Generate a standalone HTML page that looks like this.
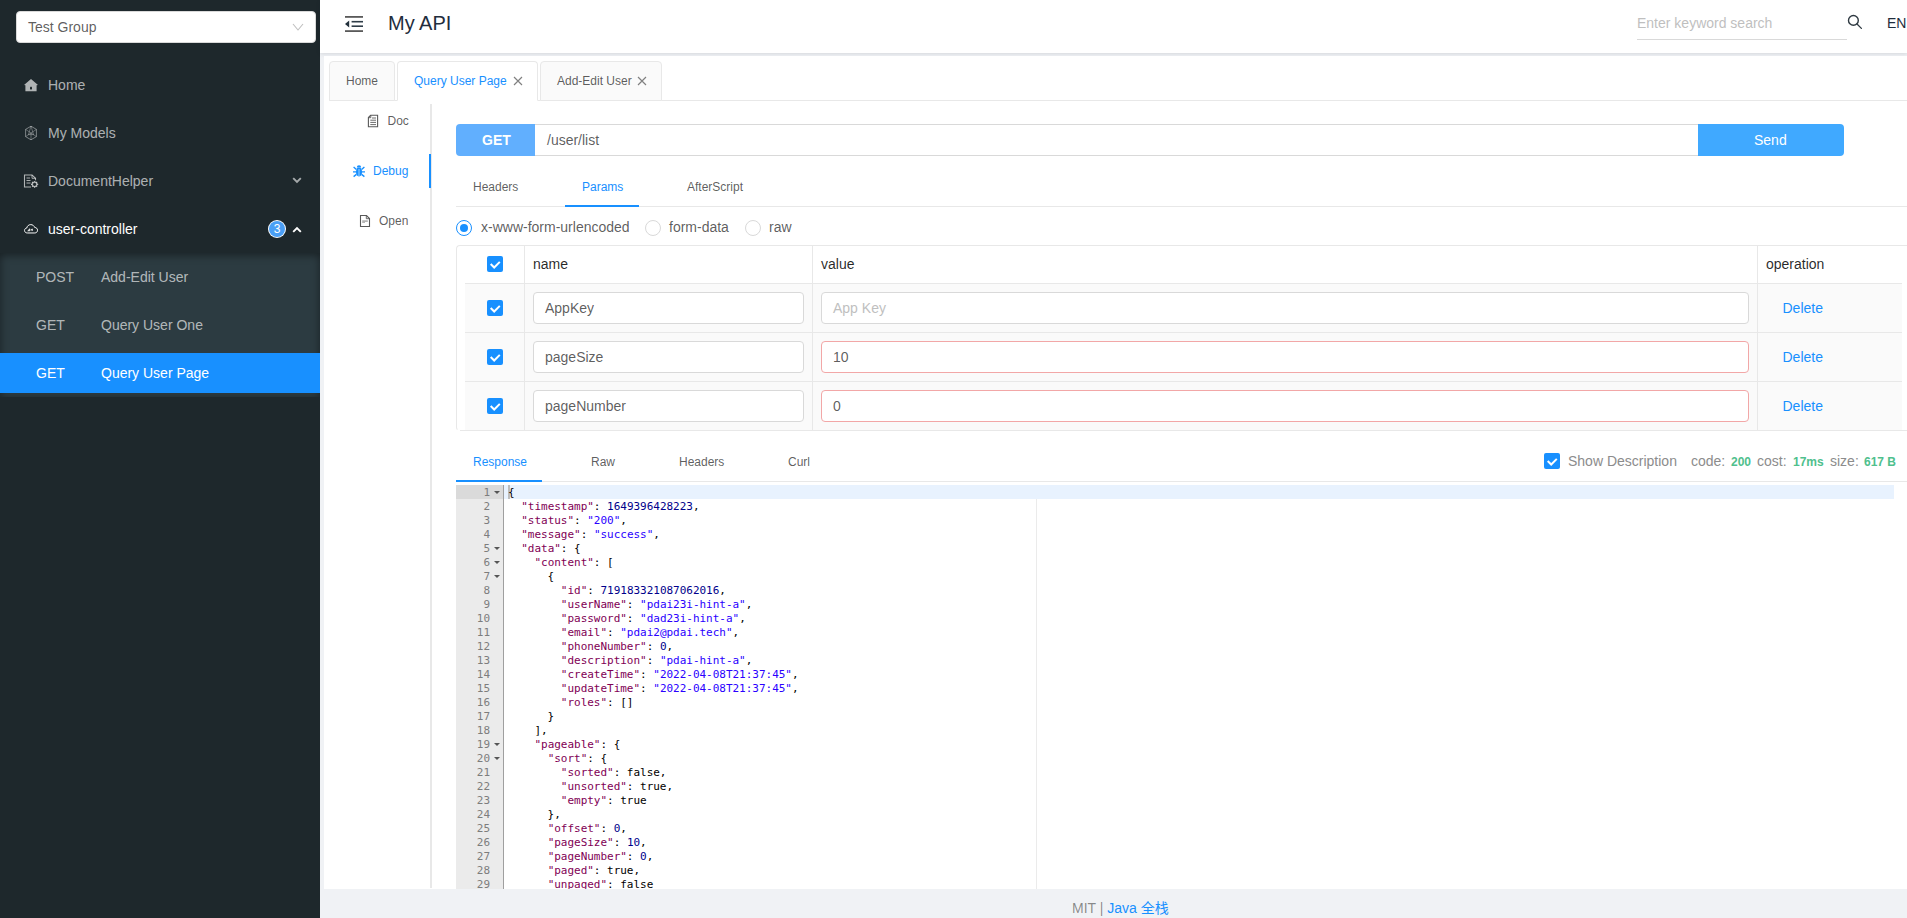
<!DOCTYPE html>
<html lang="en">
<head>
<meta charset="utf-8">
<title>My API</title>
<style>
*{box-sizing:border-box;margin:0;padding:0}
html,body{width:1907px;height:918px;overflow:hidden;background:#f0f2f5}
body{position:relative;font-family:"Liberation Sans","Noto Sans CJK SC",sans-serif;font-size:14px;color:rgba(0,0,0,.65)}
.abs{position:absolute}
.t{position:absolute;white-space:nowrap;line-height:20px;height:20px}
/* sidebar */
#side{left:0;top:0;width:320px;height:918px;background:#1e282c}
#grp{left:16px;top:11px;width:300px;height:32px;background:#fff;border:1px solid #d9d9d9;border-radius:4px}
.mi{position:absolute;left:0;width:320px;height:40px;color:rgba(255,255,255,.65);font-size:14px}
.mi .t{left:48px;top:10px}
.mi svg{position:absolute}
#sub{left:0;top:253px;width:320px;height:144px;background:#2c3b41;box-shadow:inset 0 2px 8px rgba(0,0,0,.45)}
.si{position:absolute;left:0;width:320px;height:40px;color:rgba(255,255,255,.65)}
.si .m{left:36px;top:10px}
.si .n{left:101px;top:10px}
.si.on{background:#1890ff;color:#fff}
/* header */
#hdr{left:320px;top:0;width:1587px;height:53px;background:#fff;box-shadow:0 1px 4px rgba(0,21,41,.12)}
/* main */
#main{left:324px;top:56px;width:1583px;height:833px;background:#fff}
.tab{position:absolute;top:61px;height:40px;border:1px solid #e8e8e8;border-radius:4px 4px 0 0;background:#fafafa;font-size:12px}
.tab{border-bottom-color:#e8e8e8}.tab.on{background:#fff;border-bottom-color:#fff;color:#1890ff}
.blue{color:#1890ff}
.f12{font-size:12px}
/* table */
.inp{position:absolute;height:32px;background:#fff;border:1px solid #d9d9d9;border-radius:4px}
.inp.red{border-color:#f2a7a7}
.inp .t{left:11px;top:5px}
.ck{position:absolute;width:16px;height:16px;background:#1890ff;border-radius:2px}
.hl{position:absolute;height:1px;background:#e8e8e8}
.vl{position:absolute;width:1px;background:#e8e8e8}
/* code */
#code{left:456px;top:485px;width:1438px;height:404px;overflow:hidden;font-family:"DejaVu Sans Mono",monospace;font-size:11px;letter-spacing:-0.02px;line-height:14px;color:#000}
#gut{left:0;top:0;width:47px;height:404px;background:#ebebeb;color:#7d7d7d}
.ln{position:absolute;left:0;width:34px;text-align:right;height:14px;margin-top:1px}
.cl{position:absolute;left:52px;height:14px;white-space:pre;margin-top:1px}
.fd{position:absolute;left:38px;width:0;height:0;border:3px solid transparent;border-top:3.5px solid #555;border-bottom:0}
.jk{color:#7f0055}.js{color:#2a00ff}.jn{color:#00008b}
</style>
</head>
<body>
<!-- SIDEBAR -->
<div id="side" class="abs">
  <div id="grp" class="abs"><span class="t" style="left:11px;top:5px">Test Group</span>
    <svg class="abs" style="left:274.5px;top:9px" width="12" height="12" viewBox="0 0 12 12"><path d="M1 3 L6 9 L11 3" fill="none" stroke="#bfbfbf" stroke-width="1.1"/></svg>
  </div>
  <div class="mi" style="top:65px"><svg style="left:24px;top:14px" width="14" height="13" viewBox="0 0 14 13"><path d="M7 0 L14 6 L12.6 6.3 L12.6 12.2 L1.4 12.2 L1.4 6.3 L0 6 Z" fill="rgba(255,255,255,.65)"/><rect x="6" y="7.8" width="2" height="2.6" rx=".4" fill="#1e282c"/></svg><span class="t">Home</span></div>
  <div class="mi" style="top:113px"><svg style="left:24px;top:12px" width="14" height="16" viewBox="0 0 14 16"><g fill="none" stroke="rgba(255,255,255,.42)" stroke-width="1"><path d="M7 1.2 L12.4 4.4 L12.4 11.6 L7 14.8 L1.6 11.6 L1.6 4.4 Z"/><path d="M1.6 4.4 L7 8 L12.4 4.4 M7 8 L7 14.8 M7 1.2 L4.4 9.6 L9.6 9.6 Z M1.6 11.6 L7 8 L12.4 11.6" stroke-width=".7"/></g></svg><span class="t">My Models</span></div>
  <div class="mi" style="top:161px"><svg style="left:23px;top:13px" width="16" height="14.4" viewBox="0 0 16 15" preserveAspectRatio="none"><g fill="none" stroke="rgba(255,255,255,.65)" stroke-width="1.1"><path d="M8 13.5 L1.5 13.5 L1.5 1 L9 1 L12.5 4.5 L12.5 6.5"/><path d="M9 1 L9 4.5 L12.5 4.5" stroke-width=".9"/><path d="M3.5 4.2 L7 4.2 M3.5 6.8 L7.5 6.8 M3.5 9.4 L7.5 9.4" stroke-width="1"/><circle cx="11.6" cy="10.8" r="2.3" stroke-width="1.3"/><path d="M11.6 7.2 L11.6 8.2 M11.6 13.4 L11.6 14.4 M8 10.8 L9 10.8 M14.2 10.8 L15.2 10.8 M9.1 8.3 L9.8 9 M13.4 12.6 L14.1 13.3 M9.1 13.3 L9.8 12.6 M13.4 9 L14.1 8.3" stroke-width="1.2"/></g></svg><span class="t">DocumentHelper</span><svg style="left:292px;top:16px" width="10" height="7" viewBox="0 0 10 7"><path d="M1.2 1.2 L5 5 L8.8 1.2" fill="none" stroke="rgba(255,255,255,.6)" stroke-width="1.9"/></svg></div>
  <div class="mi" style="top:209px;color:#fff"><svg style="left:24px;top:15.3px" width="14.1" height="9.7" viewBox="0 0 16 11"><path d="M4 10.2 C1.8 10.2 .6 8.9 .6 7.3 C.6 5.8 1.7 4.7 3.2 4.5 C3.6 2.2 5.4 .7 7.7 .7 C9.8 .7 11.5 2 12.1 3.9 C14 4 15.4 5.3 15.4 7.1 C15.4 8.9 14 10.2 12.2 10.2 Z" fill="none" stroke="#fff" stroke-width="1.1"/><path d="M4.2 7.8 L6.6 5.4 L6.6 7.8 Z M8.2 5.6 L8.2 7.8 M8.2 6.4 L9.6 5.6 L9.6 7.8" fill="#fff" stroke="#fff" stroke-width=".7"/></svg><span class="t">user-controller</span><div class="abs" style="left:269px;top:12px;width:16px;height:16px;border-radius:50%;background:#4a9ff5;box-shadow:0 0 0 1px #fff;color:#fff;font-size:12px;line-height:16px;text-align:center">3</div><svg style="left:292px;top:17px" width="10" height="7" viewBox="0 0 10 7"><path d="M1.2 5.8 L5 2 L8.8 5.8" fill="none" stroke="#fff" stroke-width="1.9"/></svg></div>
  <div id="sub" class="abs">
    <div class="si" style="top:4px"><span class="t m">POST</span><span class="t n">Add-Edit User</span></div>
    <div class="si" style="top:52px"><span class="t m">GET</span><span class="t n">Query User One</span></div>
    <div class="si on" style="top:100px"><span class="t m">GET</span><span class="t n">Query User Page</span></div>
  </div>
</div>
<!-- HEADER -->
<div id="hdr" class="abs">
  <span class="t" style="left:68px;top:9px;font-size:20px;line-height:28px;height:28px;color:#1f2d3d">My API</span>
  <svg class="abs" style="left:25px;top:15px" width="18" height="18" viewBox="0 0 18 18"><g fill="#5a5a5a"><rect x="0" y="1" width="18" height="1.8"/><rect x="0" y="15.2" width="18" height="1.8"/><rect x="6.6" y="5.9" width="11.4" height="1.6" fill="#2f3d48"/><rect x="6.6" y="10.4" width="11.4" height="1.6" fill="#2f3d48"/><path d="M0 9 L4.2 5.4 L4.2 12.6 Z" fill="#22303c"/></g></svg>
  <span class="t" style="left:1317px;top:13px;color:#bfbfbf">Enter keyword search</span>
  <div class="hl" style="left:1317px;top:39px;width:210px;background:#d9d9d9"></div>
  <svg class="abs" style="left:1527px;top:14px" width="16" height="16" viewBox="0 0 16 16"><circle cx="6.4" cy="6.4" r="4.9" fill="none" stroke="#2f3a42" stroke-width="1.4"/><path d="M10 10 L14.4 14.4" stroke="#2f3a42" stroke-width="1.3" stroke-linecap="round"/></svg>
  <span class="t" style="left:1567px;top:13px;color:#1f2d3d">EN</span>
</div>
<!-- MAIN -->
<div id="main" class="abs"></div>
<!--TABS-->
<div class="hl" style="left:329px;top:100px;width:1578px"></div>
<div class="tab" style="left:329px;width:66px"><span class="t" style="left:16px;top:9px">Home</span></div>
<div class="tab on" style="left:397px;width:141px"><span class="t" style="left:16px;top:9px">Query User Page</span>
  <svg class="abs" style="left:115px;top:14px" width="10" height="10" viewBox="0 0 10 10"><path d="M1 1 L9 9 M9 1 L1 9" stroke="#808080" stroke-width="1.15" fill="none"/></svg></div>
<div class="tab" style="left:540px;width:122px"><span class="t" style="left:16px;top:9px">Add-Edit User</span>
  <svg class="abs" style="left:96px;top:14px" width="10" height="10" viewBox="0 0 10 10"><path d="M1 1 L9 9 M9 1 L1 9" stroke="#808080" stroke-width="1.15" fill="none"/></svg></div>
<!--LEFTTABS-->
<div class="vl" style="left:430px;top:104px;height:784px;width:2px"></div>
<div class="abs" style="left:429px;top:154px;width:2px;height:34px;background:#1890ff"></div>
<svg class="abs" style="left:367px;top:114px" width="12" height="14" viewBox="0 0 12 14"><g fill="none" stroke="#595959"><path d="M3.6 1.3 L10.6 1.3 L10.6 12.7 L1.4 12.7 L1.4 3.5 Z" stroke-width="1.1"/><path d="M3.8 1.3 L3.8 3.7 L1.4 3.7" stroke-width=".9"/><path d="M5 4 L9 4 M3.3 6.2 L9 6.2 M3.3 8.4 L9 8.4 M3.3 10.6 L9 10.6" stroke-width=".9"/></g></svg>
<span class="t f12" style="left:387.5px;top:111px">Doc</span>
<svg class="abs" style="left:352px;top:164px" width="14" height="14" viewBox="0 0 14 14"><g fill="#1890ff" stroke="#1890ff"><ellipse cx="7" cy="8" rx="3" ry="4.4" stroke="none"/><path d="M4.8 3.6 A2.2 2.4 0 0 1 9.2 3.6 Z" stroke="none"/><path d="M1 7.8 L13 7.8 M1.6 3 L4.4 5.4 M12.4 3 L9.6 5.4 M1.6 12.6 L4.4 10.4 M12.4 12.6 L9.6 10.4" stroke-width="1.35" fill="none"/><path d="M7 5 L7 12" stroke="#fff" stroke-width=".6"/></g></svg>
<span class="t f12 blue" style="left:373px;top:161px">Debug</span>
<svg class="abs" style="left:359px;top:214px" width="12" height="14" viewBox="0 0 12 14"><g fill="none" stroke="#595959"><path d="M1.5 1.5 L7.5 1.5 L10.5 4.5 L10.5 12.5 L1.5 12.5 Z" stroke-width="1.1"/><path d="M7.3 1.5 L7.3 4.7 L10.5 4.7" stroke-width=".9"/></g><path d="M3.2 6.2 L8.8 6.2 L8.8 8 L6 8 L6 9 L3.2 9 Z" fill="#b5b5b5"/></svg>
<span class="t f12" style="left:379px;top:211px">Open</span>
<!--REQUEST-->
<div class="abs" style="left:456px;top:124px;width:80px;height:32px;background:#61affe;border-radius:4px 0 0 4px"></div>
<span class="t" style="left:482px;top:130px;color:#fff;font-weight:bold">GET</span>
<div class="abs" style="left:535px;top:124px;width:1164px;height:32px;background:#fff;border:1px solid #d9d9d9;border-left:0"></div>
<span class="t" style="left:547px;top:130px">/user/list</span>
<div class="abs" style="left:1698px;top:124px;width:146px;height:32px;background:#40a9ff;border-radius:0 4px 4px 0"></div>
<span class="t" style="left:1754px;top:130px;color:#fff">Send</span>
<div class="hl" style="left:456px;top:206px;width:1451px"></div>
<div class="abs" style="left:565px;top:205px;width:74px;height:2px;background:#1890ff"></div>
<span class="t f12" style="left:473px;top:177px">Headers</span>
<span class="t f12 blue" style="left:582px;top:177px">Params</span>
<span class="t f12" style="left:687px;top:177px">AfterScript</span>
<div class="abs" style="left:456px;top:220px;width:16px;height:16px;border:1px solid #1890ff;border-radius:50%;background:#fff"></div>
<div class="abs" style="left:460px;top:224px;width:8px;height:8px;border-radius:50%;background:#1890ff"></div>
<span class="t" style="left:481px;top:217px">x-www-form-urlencoded</span>
<div class="abs" style="left:645px;top:220px;width:16px;height:16px;border:1px solid #d9d9d9;border-radius:50%;background:#fff"></div>
<span class="t" style="left:669px;top:217px">form-data</span>
<div class="abs" style="left:745px;top:220px;width:16px;height:16px;border:1px solid #d9d9d9;border-radius:50%;background:#fff"></div>
<span class="t" style="left:769px;top:217px">raw</span>
<!--TABLE-->
<div class="abs" style="left:465px;top:284px;width:1437px;height:147px;background:#fafafa"></div>
<div class="abs" style="left:456px;top:245px;width:1460px;height:186px;border:1px solid #e8e8e8;border-right:0;border-radius:4px 0 0 4px;border-bottom-color:transparent"></div>
<div class="hl" style="left:465px;top:283px;width:1437px"></div>
<div class="hl" style="left:465px;top:332px;width:1437px"></div>
<div class="hl" style="left:465px;top:381px;width:1437px"></div>
<div class="hl" style="left:460px;top:430px;width:1447px"></div>
<div class="vl" style="left:524px;top:246px;height:185px"></div>
<div class="vl" style="left:812px;top:246px;height:185px"></div>
<div class="vl" style="left:1757px;top:246px;height:185px"></div>
<div class="ck" style="left:487px;top:256px"><svg width="16" height="16" viewBox="0 0 16 16" style="display:block"><path d="M3.7 8 L7.2 11.5 L12.8 5.9" stroke="#fff" stroke-width="2" fill="none"/></svg></div>
<span class="t" style="left:533px;top:254px;color:rgba(0,0,0,.85)">name</span>
<span class="t" style="left:821px;top:254px;color:rgba(0,0,0,.85)">value</span>
<span class="t" style="left:1766px;top:254px;color:rgba(0,0,0,.85)">operation</span>
<div class="ck" style="left:487px;top:300px"><svg width="16" height="16" viewBox="0 0 16 16" style="display:block"><path d="M3.7 8 L7.2 11.5 L12.8 5.9" stroke="#fff" stroke-width="2" fill="none"/></svg></div>
<div class="inp" style="left:533px;top:292px;width:271px"><span class="t">AppKey</span></div>
<div class="inp" style="left:821px;top:292px;width:928px"><span class="t" style="color:#bfbfbf">App Key</span></div>
<span class="t blue" style="left:1782.5px;top:298px">Delete</span>
<div class="ck" style="left:487px;top:349px"><svg width="16" height="16" viewBox="0 0 16 16" style="display:block"><path d="M3.7 8 L7.2 11.5 L12.8 5.9" stroke="#fff" stroke-width="2" fill="none"/></svg></div>
<div class="inp" style="left:533px;top:341px;width:271px"><span class="t">pageSize</span></div>
<div class="inp red" style="left:821px;top:341px;width:928px"><span class="t">10</span></div>
<span class="t blue" style="left:1782.5px;top:347px">Delete</span>
<div class="ck" style="left:487px;top:398px"><svg width="16" height="16" viewBox="0 0 16 16" style="display:block"><path d="M3.7 8 L7.2 11.5 L12.8 5.9" stroke="#fff" stroke-width="2" fill="none"/></svg></div>
<div class="inp" style="left:533px;top:390px;width:271px"><span class="t">pageNumber</span></div>
<div class="inp red" style="left:821px;top:390px;width:928px"><span class="t">0</span></div>
<span class="t blue" style="left:1782.5px;top:396px">Delete</span>
<!--RESPONSE-->
<div class="hl" style="left:456px;top:481px;width:1451px"></div>
<div class="abs" style="left:456px;top:480px;width:86px;height:2px;background:#1890ff"></div>
<span class="t f12 blue" style="left:473px;top:452px">Response</span>
<span class="t f12" style="left:591px;top:452px">Raw</span>
<span class="t f12" style="left:679px;top:452px">Headers</span>
<span class="t f12" style="left:788px;top:452px">Curl</span>
<div class="ck" style="left:1544px;top:453px"><svg width="16" height="16" viewBox="0 0 16 16" style="display:block"><path d="M3.7 8 L7.2 11.5 L12.8 5.9" stroke="#fff" stroke-width="2" fill="none"/></svg></div>
<span class="t" style="left:1568px;top:451px;color:#8c8c8c">Show Description</span>
<span class="t" style="left:1691px;top:451px;color:#8c8c8c">code:</span>
<span class="t f12" style="left:1731px;top:452px;color:#4fc08d;font-weight:bold">200</span>
<span class="t" style="left:1757px;top:451px;color:#8c8c8c">cost:</span>
<span class="t f12" style="left:1793px;top:452px;color:#4fc08d;font-weight:bold">17ms</span>
<span class="t" style="left:1830px;top:451px;color:#8c8c8c">size:</span>
<span class="t f12" style="left:1864px;top:452px;color:#4fc08d;font-weight:bold">617 B</span>
<!--CODE-->
<div id="code" class="abs">
<div class="vl" style="left:580px;top:0;height:404px;background:#ebebeb"></div>
<div class="abs" style="left:48px;top:0;width:1390px;height:14px;background:#e8f2fe"></div>
<div id="gut" class="abs"><div class="abs" style="left:0;top:0;width:47px;height:14px;background:#dadada"></div>
<div class="ln" style="top:0px">1</div><i class="fd" style="top:6px"></i>
<div class="ln" style="top:14px">2</div>
<div class="ln" style="top:28px">3</div>
<div class="ln" style="top:42px">4</div>
<div class="ln" style="top:56px">5</div><i class="fd" style="top:62px"></i>
<div class="ln" style="top:70px">6</div><i class="fd" style="top:76px"></i>
<div class="ln" style="top:84px">7</div><i class="fd" style="top:90px"></i>
<div class="ln" style="top:98px">8</div>
<div class="ln" style="top:112px">9</div>
<div class="ln" style="top:126px">10</div>
<div class="ln" style="top:140px">11</div>
<div class="ln" style="top:154px">12</div>
<div class="ln" style="top:168px">13</div>
<div class="ln" style="top:182px">14</div>
<div class="ln" style="top:196px">15</div>
<div class="ln" style="top:210px">16</div>
<div class="ln" style="top:224px">17</div>
<div class="ln" style="top:238px">18</div>
<div class="ln" style="top:252px">19</div><i class="fd" style="top:258px"></i>
<div class="ln" style="top:266px">20</div><i class="fd" style="top:272px"></i>
<div class="ln" style="top:280px">21</div>
<div class="ln" style="top:294px">22</div>
<div class="ln" style="top:308px">23</div>
<div class="ln" style="top:322px">24</div>
<div class="ln" style="top:336px">25</div>
<div class="ln" style="top:350px">26</div>
<div class="ln" style="top:364px">27</div>
<div class="ln" style="top:378px">28</div>
<div class="ln" style="top:392px">29</div>
</div>
<div class="vl" style="left:47px;top:0;height:404px;background:#9f9f9f"></div>
<div class="abs" style="left:52px;top:0;width:2px;height:14px;background:#bdbdbd"></div>
<div class="cl" style="top:0px">{</div>
<div class="cl" style="top:14px">  <span class="jk">"timestamp"</span>: <span class="jn">1649396428223</span>,</div>
<div class="cl" style="top:28px">  <span class="jk">"status"</span>: <span class="js">"200"</span>,</div>
<div class="cl" style="top:42px">  <span class="jk">"message"</span>: <span class="js">"success"</span>,</div>
<div class="cl" style="top:56px">  <span class="jk">"data"</span>: {</div>
<div class="cl" style="top:70px">    <span class="jk">"content"</span>: [</div>
<div class="cl" style="top:84px">      {</div>
<div class="cl" style="top:98px">        <span class="jk">"id"</span>: <span class="jn">719183321087062016</span>,</div>
<div class="cl" style="top:112px">        <span class="jk">"userName"</span>: <span class="js">"pdai23i-hint-a"</span>,</div>
<div class="cl" style="top:126px">        <span class="jk">"password"</span>: <span class="js">"dad23i-hint-a"</span>,</div>
<div class="cl" style="top:140px">        <span class="jk">"email"</span>: <span class="js">"pdai2@pdai.tech"</span>,</div>
<div class="cl" style="top:154px">        <span class="jk">"phoneNumber"</span>: <span class="jn">0</span>,</div>
<div class="cl" style="top:168px">        <span class="jk">"description"</span>: <span class="js">"pdai-hint-a"</span>,</div>
<div class="cl" style="top:182px">        <span class="jk">"createTime"</span>: <span class="js">"2022-04-08T21:37:45"</span>,</div>
<div class="cl" style="top:196px">        <span class="jk">"updateTime"</span>: <span class="js">"2022-04-08T21:37:45"</span>,</div>
<div class="cl" style="top:210px">        <span class="jk">"roles"</span>: []</div>
<div class="cl" style="top:224px">      }</div>
<div class="cl" style="top:238px">    ],</div>
<div class="cl" style="top:252px">    <span class="jk">"pageable"</span>: {</div>
<div class="cl" style="top:266px">      <span class="jk">"sort"</span>: {</div>
<div class="cl" style="top:280px">        <span class="jk">"sorted"</span>: false,</div>
<div class="cl" style="top:294px">        <span class="jk">"unsorted"</span>: true,</div>
<div class="cl" style="top:308px">        <span class="jk">"empty"</span>: true</div>
<div class="cl" style="top:322px">      },</div>
<div class="cl" style="top:336px">      <span class="jk">"offset"</span>: <span class="jn">0</span>,</div>
<div class="cl" style="top:350px">      <span class="jk">"pageSize"</span>: <span class="jn">10</span>,</div>
<div class="cl" style="top:364px">      <span class="jk">"pageNumber"</span>: <span class="jn">0</span>,</div>
<div class="cl" style="top:378px">      <span class="jk">"paged"</span>: true,</div>
<div class="cl" style="top:392px">      <span class="jk">"unpaged"</span>: false</div>
</div>
<!--FOOTER-->
<div class="abs" style="left:320px;top:889px;width:1587px;height:29px;background:#f0f2f5"></div>
<span class="t" style="left:1072px;top:898px;color:rgba(0,0,0,.45)">MIT | <span class="blue">Java 全栈</span></span>
</body>
</html>
